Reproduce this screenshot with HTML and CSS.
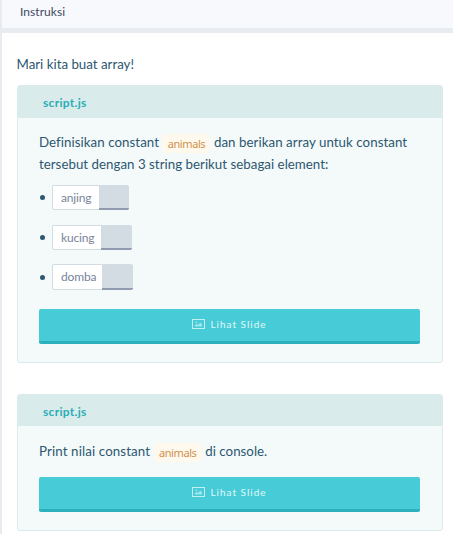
FILE: index.html
```html
<!DOCTYPE html>
<html lang="id">
<head>
<meta charset="utf-8">
<title>Instruksi</title>
<link rel="stylesheet" href="styles.css">
</head>
<body>
<svg width="0" height="0" class="defs">
  <symbol id="slide" viewBox="0 0 13 10">
    <rect x=".5" y=".5" width="12" height="9" fill="none" stroke="currentColor" opacity=".8"/>
    <path d="M3 7.5V6l1.5-1.2L6 6l2.3-2.5L10 5.5v2z" fill="currentColor" opacity=".6"/>
    <circle cx="4.3" cy="3.2" r=".8" fill="currentColor" opacity=".7"/>
  </symbol>
</svg>
<div class="panel">
  <header class="title"><span>Instruksi</span></header>
  <main class="content">
    <p class="intro"><span>Mari kita buat array!</span></p>
    <section class="card">
      <h2 class="file"><span>script.js</span></h2>
      <div class="body">
        <p class="text"><span>Definisikan constant</span> <code>animals</code> <span>dan berikan array untuk constant</span><br><span class="line">tersebut dengan 3 string berikut sebagai element:</span></p>
        <ul class="items">
          <li><span class="copy"><span class="value">anjing</span></span></li>
          <li><span class="copy kucing"><span class="value">kucing</span></span></li>
          <li><span class="copy domba"><span class="value">domba</span></span></li>
        </ul>
        <a class="button"><svg class="icon"><use href="#slide"/></svg><span>Lihat Slide</span></a>
      </div>
    </section>
    <section class="card second-card">
      <h2 class="file"><span>script.js</span></h2>
      <div class="body">
        <p class="text"><span>Print nilai constant</span> <code>animals</code> <span class="line">di console.</span></p>
        <a class="button"><svg class="icon"><use href="#slide"/></svg><span>Lihat Slide</span></a>
      </div>
    </section>
  </main>
</div>
</body>
</html>
```
FILE: styles.css
```css
* { box-sizing: border-box; }
body { margin: 0; background: #fff; color: #2d5770; font-family: Lato, "Liberation Sans", sans-serif; overflow: hidden; }
.defs { display: none; }
.panel { height: 534px; border-left: 2px solid #e8ecf0; }
.title { height: 33px; padding-left: 18px; border-bottom: 5px solid #e8ecf0; background: #f8f9fd; color: #3d4a5f; font-size: 12px; line-height: 24px; letter-spacing: .05px; }
.content { padding: 20px 10px 0 15px; }
.intro { margin: 0 0 0 -.5px; height: 32px; font-size: 13.3px; line-height: 22px; }
.card { height: 278px; border: 1px solid #d9eceb; border-radius: 3px; background: #f4fafa; }
.second-card { height: 137px; margin-top: 31px; }
.file { margin: 0; height: 32px; padding-left: 25px; background: #d9eceb; color: #2bacb6; font-size: 12px; line-height: 34px; letter-spacing: .3px; }
.second-card .file { height: 31px; }
.body { padding: 13px 22px 0 21px; }
.second-card .body { padding-top: 14px; }
.text { margin: 0; height: 44px; font-size: 13.3px; line-height: 22px; letter-spacing: .05px; white-space: nowrap; }
.second-card .text { height: 22px; letter-spacing: .12px; }
.text .line { letter-spacing: .02px; }
code { display: inline-block; height: 19px; width: 48px; text-align: center; border-radius: 4px; background: #fff8ec; color: #d0914e; font: 11px/20px "Noto Sans", sans-serif; letter-spacing: -.4px; vertical-align: -1px; margin: -4px 0; }
.items { margin: 9px 0 0; padding: 0; list-style: none; }
.items li { display: flex; align-items: center; height: 26px; margin-bottom: 14px; }
.items li::before { content: ""; width: 5px; height: 5px; margin: 0 7px 0 1px; border-radius: 50%; background: #2d5770; }
.copy { display: flex; width: 77px; height: 25px; border: 1px solid #d3dbe3; border-radius: 2px; background: #fff; color: #78849a; font-size: 12px; letter-spacing: -.15px; }
.copy::after { content: ""; flex: 1; background: #d3dbe3; border-bottom: 2px solid #919bb0; margin-bottom: -1px; margin-right: -1px; border-bottom-right-radius: 2px; }
.value { width: 46px; padding-left: 8px; line-height: 24px; }
.kucing { width: 80px; }
.kucing .value { width: 48px; }
.domba { width: 81px; height: 26px; }
.domba .value { width: 49px; }
.button { display: flex; align-items: center; justify-content: center; gap: 5px; height: 35px; margin-top: 19px; border-bottom: 3px solid #2cb2bf; border-radius: 2px; background: #47cbd7; color: #e0f8fa; font-size: 10px; letter-spacing: 1px; padding-bottom: 2px; }
.second-card .button { margin-top: 15px; }
.icon { width: 13px; height: 10px; }
.button span { margin-top: -1px; }
```
